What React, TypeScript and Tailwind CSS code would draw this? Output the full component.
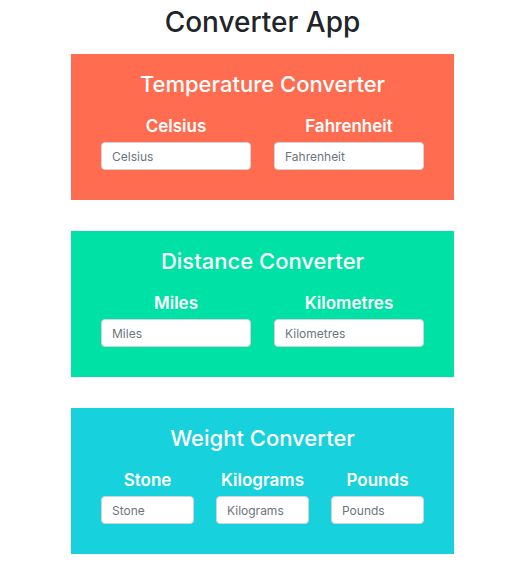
import React from "react";

interface ConverterProps {
  title: string;
  color: string;
  units: string[];
  inputWidth: string;
  gap: string;
}

const Converter: React.FC<ConverterProps> = ({ title, color, units, inputWidth, gap }) => {
  const [values, setValues] = React.useState<Record<string, string>>({});

  return (
    <div className={`${color} pt-[16px] pb-[30px]`}>
      <h2 className="text-center text-[22px] leading-[28px] font-medium text-white">{title}</h2>
      <div className={`mt-[17px] flex justify-center ${gap}`}>
        {units.map((unit) => (
          <div key={unit} className="flex flex-col items-center">
            <label className="text-[17px] leading-[22px] font-semibold text-white">{unit}</label>
            <input
              type="text"
              placeholder={unit}
              value={values[unit] ?? ""}
              onChange={(e) => setValues({ ...values, [unit]: e.target.value })}
              className={`${inputWidth} mt-[5px] h-[28px] rounded-[4px] border border-[#ced4da] bg-white px-[10px] text-[12px] text-[#495057] placeholder:text-[#6c757d] outline-none`}
            />
          </div>
        ))}
      </div>
    </div>
  );
};

export default function App() {
  return (
    <div className="min-h-[568px] bg-white font-['Inter',sans-serif]">
      <div className="mx-auto w-[383px]">
        <h1 className="pt-[5px] pb-[15px] text-center text-[28px] leading-[34px] font-medium text-[#212529]">
          Converter App
        </h1>
        <div className="flex flex-col gap-[31px]">
          <Converter
            title="Temperature Converter"
            color="bg-[#ff6c4f]"
            units={["Celsius", "Fahrenheit"]}
            inputWidth="w-[150px]"
            gap="gap-[23px]"
          />
          <Converter
            title="Distance Converter"
            color="bg-[#00e1a5]"
            units={["Miles", "Kilometres"]}
            inputWidth="w-[150px]"
            gap="gap-[23px]"
          />
          <Converter
            title="Weight Converter"
            color="bg-[#17d1dd]"
            units={["Stone", "Kilograms", "Pounds"]}
            inputWidth="w-[93px]"
            gap="gap-[22px]"
          />
        </div>
      </div>
    </div>
  );
}
